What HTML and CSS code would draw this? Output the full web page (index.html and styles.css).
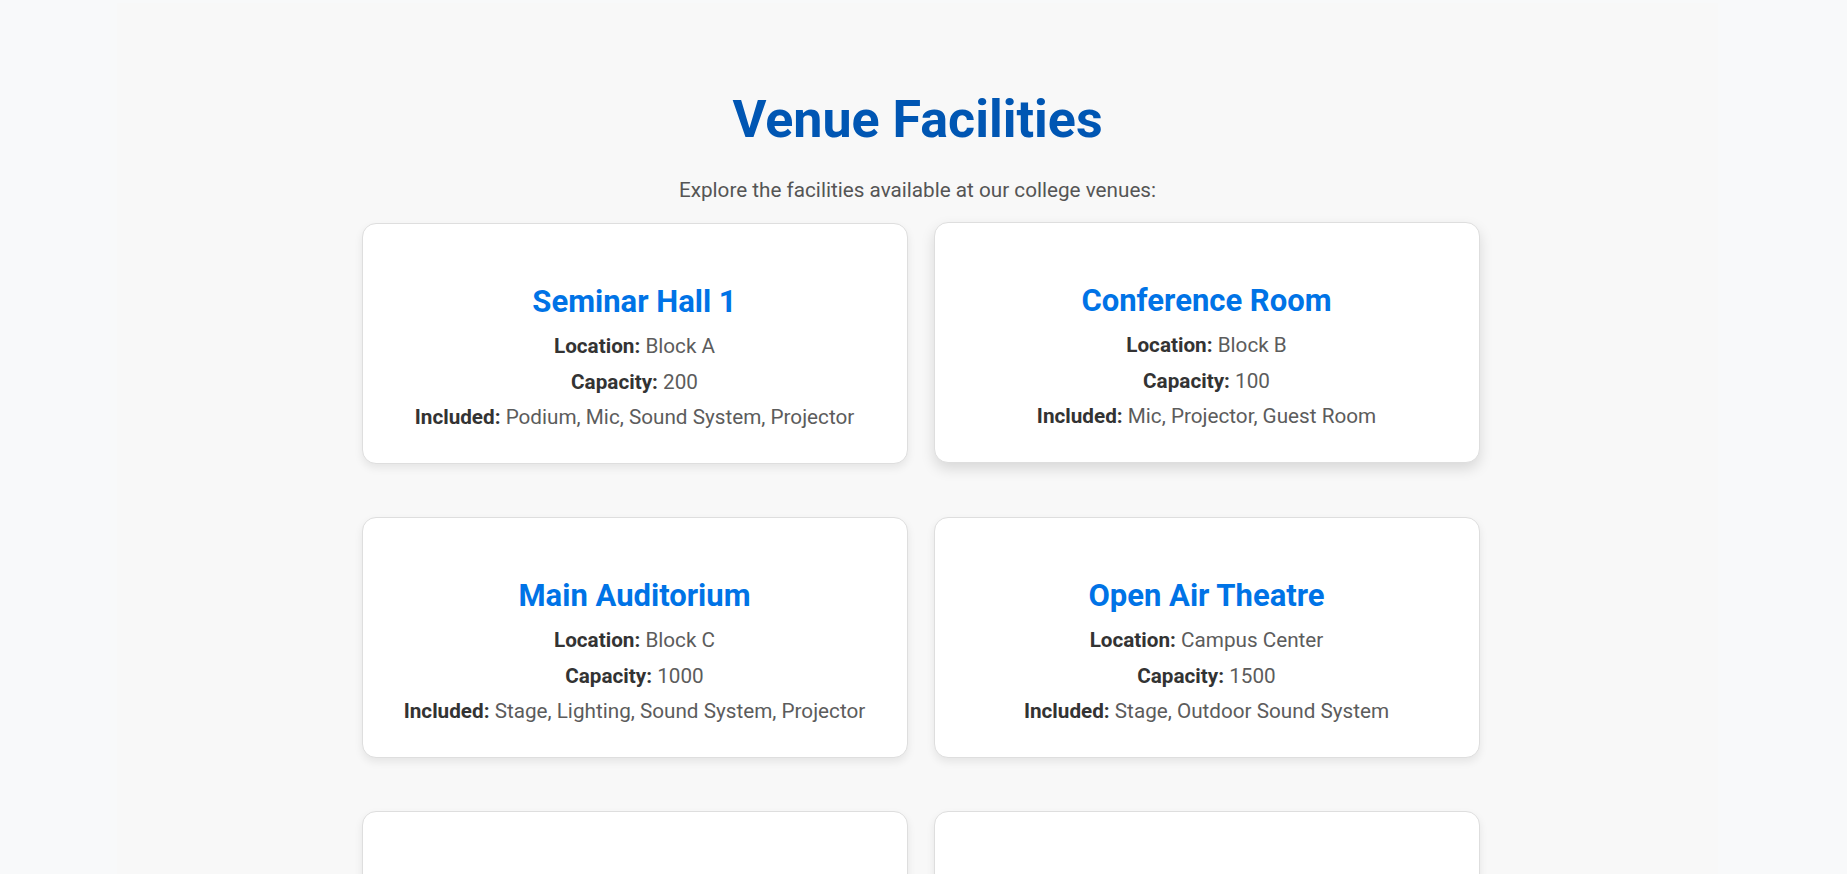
FILE: index.html
```html
<!DOCTYPE html>
<html lang="en">
<head>
<meta charset="utf-8">
<title>Venue Facilities</title>
<link rel="stylesheet" href="styles.css">
</head>
<body>
<main class="page">
  <h1 class="page-title">Venue Facilities</h1>
  <p class="intro">Explore the facilities available at our college venues:</p>
  <section class="venue-grid">
    <article class="venue-card">
      <h2 class="venue-name">Seminar Hall 1</h2>
      <p class="venue-line"><strong>Location:</strong> Block A</p>
      <p class="venue-line"><strong>Capacity:</strong> 200</p>
      <p class="venue-line"><strong>Included:</strong> Podium, Mic, Sound System, Projector</p>
    </article>
    <article class="venue-card venue-card--hover">
      <h2 class="venue-name">Conference Room</h2>
      <p class="venue-line"><strong>Location:</strong> Block B</p>
      <p class="venue-line"><strong>Capacity:</strong> 100</p>
      <p class="venue-line"><strong>Included:</strong> Mic, Projector, Guest Room</p>
    </article>
    <article class="venue-card">
      <h2 class="venue-name">Main Auditorium</h2>
      <p class="venue-line"><strong>Location:</strong> Block C</p>
      <p class="venue-line"><strong>Capacity:</strong> 1000</p>
      <p class="venue-line"><strong>Included:</strong> Stage, Lighting, Sound System, Projector</p>
    </article>
    <article class="venue-card">
      <h2 class="venue-name">Open Air Theatre</h2>
      <p class="venue-line"><strong>Location:</strong> Campus Center</p>
      <p class="venue-line"><strong>Capacity:</strong> 1500</p>
      <p class="venue-line"><strong>Included:</strong> Stage, Outdoor Sound System</p>
    </article>
    <article class="venue-card">
      <h2 class="venue-name">Seminar Hall 2</h2>
      <p class="venue-line"><strong>Location:</strong> Block D</p>
      <p class="venue-line"><strong>Capacity:</strong> 150</p>
      <p class="venue-line"><strong>Included:</strong> Podium, Mic, Projector</p>
    </article>
    <article class="venue-card">
      <h2 class="venue-name">Sports Complex</h2>
      <p class="venue-line"><strong>Location:</strong> Block E</p>
      <p class="venue-line"><strong>Capacity:</strong> 800</p>
      <p class="venue-line"><strong>Included:</strong> Indoor Courts, Sound System</p>
    </article>
  </section>
</main>
</body>
</html>
```
FILE: styles.css
```css
html {
  background: #ffffff;
}

body {
  margin: 0;
  padding: 3px 12px 0 0;
  background: #f8f9fa;
  font-family: Roboto, "Liberation Sans", Arial, sans-serif;
  color: #333333;
}

.page {
  max-width: 1601px;
  margin: 0 auto;
  padding: 40px 0 40px;
  background: #f8f8f8;
  text-align: center;
}

.page-title {
  margin: 46px 0 27px;
  font-size: 52px;
  line-height: 1.2;
  font-weight: 700;
  color: #0056b3;
}

.intro {
  margin: 0 0 20px;
  font-size: 20.7px;
  line-height: 1.2;
  color: #555555;
}

.venue-grid {
  display: grid;
  grid-template-columns: repeat(2, 546px);
  justify-content: center;
  column-gap: 26px;
  row-gap: 53px;
  padding-left: 6px;
}

.venue-card {
  background: #ffffff;
  border: 1px solid #dedede;
  border-radius: 14px;
  box-shadow: 0 4px 8px rgba(0, 0, 0, 0.08);
  padding: 20px 20px 23px;
  height: 241px;
  box-sizing: border-box;
}

.venue-card--hover {
  transform: translateY(-1px);
  box-shadow: 0 6px 14px rgba(0, 0, 0, 0.13);
}

.venue-name {
  margin: 39px 0 15px;
  font-size: 31px;
  line-height: 1.2;
  font-weight: 700;
  color: #0073e6;
}

.venue-line {
  margin: 12px 0;
  font-size: 20.7px;
  line-height: 23.5px;
  color: #5c5c5c;
}

.venue-line strong {
  color: #333333;
  font-weight: 700;
}
```
